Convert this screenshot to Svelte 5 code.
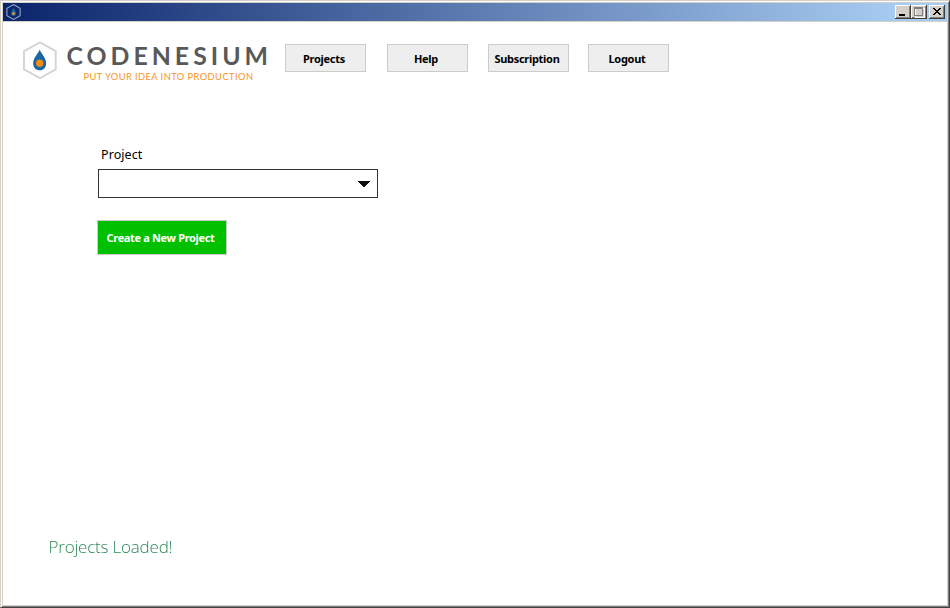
<script>
  const menu = [
    { id: 'projects', label: 'Projects' },
    { id: 'help', label: 'Help' },
    { id: 'subscription', label: 'Subscription' },
    { id: 'logout', label: 'Logout' }
  ];
</script>

<div class="window">
  <div class="titlebar">
    <svg class="app-icon" width="17" height="16" viewBox="-.5 0 17 16">
      <path d="M8 .6 14.600 4.300v7.400L8 15.400 1.400 11.700V4.300Z" fill="none" stroke="#98a6c4" stroke-width="1.1" />
      <path d="M8 3.500C7 6 5.500 7.500 5.500 9.300a2.500 2.600 0 0 0 5 0C10.500 7.500 9 6 8 3.500Z" fill="#1467a2" />
      <circle cx="8" cy="9.500" r="1.500" fill="#e0912b" />
    </svg>
    <div class="controls">
      <button class="ctl" aria-label="Minimize">
        <svg width="16" height="14" shape-rendering="crispEdges"><rect x="4" y="9" width="6" height="2" fill="#000" /></svg>
      </button>
      <button class="ctl" aria-label="Maximize">
        <svg width="16" height="14" shape-rendering="crispEdges">
          <path d="M4 3h9v9H4z" fill="none" stroke="#fff" transform="translate(.5 .5)" />
          <path d="M3 2h9v2H3zM3 3h1v8H3zM11 3h1v8h-1zM3 10h9v1H3z" fill="#808080" />
        </svg>
      </button>
      <button class="ctl close" aria-label="Close">
        <svg width="16" height="14" shape-rendering="crispEdges">
          <path d="M4 3h2v1h1v1h2V4h1V3h2v1h-1v1h-1v1H9v1h1v1h1v1h1v1h-2V9H9V8H7v1H6v1H4V9h1V8h1V7h1V6H6V5H5V4H4z" fill="#000" />
        </svg>
      </button>
    </div>
  </div>

  <div class="client">
    <header>
      <svg class="logo" width="250" height="46" viewBox="20 38 250 46">
        <path d="M40 42.300 55.700 51.200V69.300L40 78.200 24 69.300V51.200Z" fill="none" stroke="#d4d6d6" stroke-width="2" />
        <path d="M39.700 49.500C38.200 54 33.200 57.500 33.200 63.500c0 4 2.800 6.800 6.500 6.800s6.400-2.800 6.400-6.800C46.100 57.500 41.200 54 39.700 49.500Z" fill="#1767a4" />
        <circle cx="39.700" cy="63.300" r="3.700" fill="#f58a12" />
        <text class="brand" x="66.500" y="65" textLength="201.500">CODENESIUM</text>
        <text class="tagline" x="83.500" y="80" textLength="169.500">PUT YOUR IDEA INTO PRODUCTION</text>
      </svg>
      <nav>
        {#each menu as item}
          <button class="nav-btn {item.id}"><span>{item.label}</span></button>
        {/each}
      </nav>
    </header>

    <main>
      <label for="project">Project</label>
      <button id="project" class="combo" aria-label="Project">
        <svg width="12" height="6" shape-rendering="crispEdges"><path d="M0 0h12v1h-1v1h-1v1H9v1H8v1H7v1H5V5H4V4H3V3H2V2H1V1H0z" fill="#111" /></svg>
      </button>
      <button class="create"><span>Create a New Project</span></button>
    </main>

    <div class="status">Projects Loaded!</div>
  </div>
</div>

<style>
  :global(body) { margin: 0; overflow: hidden; }
  * { box-sizing: border-box; }
  button { margin: 0; padding: 0; font: inherit; border-radius: 0; }
  svg { display: block; }
  .window {
    width: 950px;
    height: 608px;
    display: flex;
    flex-direction: column;
    background: #d4d0c8;
    border: 1px solid;
    border-color: #d4d0c8 #404040 #404040 #d4d0c8;
    box-shadow: inset 1px 1px #fff, inset -1px -1px #808080;
    padding: 2px;
    font-family: "Noto Sans", "Open Sans", sans-serif;
  }
  .titlebar {
    height: 18px;
    flex: none;
    display: flex;
    justify-content: space-between;
    align-items: center;
    padding: 0 2px;
    background: linear-gradient(90deg, #0a246a, #a6caf0 890px);
  }
  .controls { display: flex; }
  .ctl {
    width: 16px;
    height: 14px;
    border: 0;
    background: #d4d0c8;
    box-shadow: inset -1px -1px #404040, inset 1px 1px #fff, inset -2px -2px #808080;
  }
  .close { margin-left: 2px; }
  .client {
    flex: 1;
    display: flex;
    flex-direction: column;
    background: #fff;
    border-top: 1px solid #d4d0c8;
  }
  header { display: flex; height: 108px; padding: 16px 0 0 17px; }
  .brand { font: 700 24.800px Lato, sans-serif; fill: #58595b; }
  .tagline { font: 400 9.300px Lato, sans-serif; fill: #f7941e; }
  nav { display: flex; gap: 20px; padding: 6px 0 0 15px; }
  .nav-btn {
    width: 81px;
    height: 28px;
    border: 1px solid #ccc;
    background: #eee;
    color: #000;
    font-weight: 700;
    font-size: 11px;
    letter-spacing: -.3px;
    line-height: 26px;
    white-space: nowrap;
  }
  .nav-btn span { display: block; padding-top: 1px; margin: 0 -2px 0 -5px; }
  .projects { margin-right: 1px; }
  .logout { margin-left: -1px; }
  main { display: flex; flex-direction: column; align-items: flex-start; padding: 14px 0 0 94px; flex: 1; }
  label { font-size: 12.500px; line-height: 22px; letter-spacing: .08px; padding-left: 4px; height: 25px; color: #000; }
  .combo {
    width: 280px;
    height: 29px;
    margin-left: 1px;
    display: flex;
    align-items: center;
    justify-content: flex-end;
    padding-right: 8px;
    border: 1px solid #333;
    background: #fff;
  }
  .combo svg { margin-right: -.5px; }
  .create {
    width: 130px;
    height: 35px;
    margin-top: 22px;
    border: 1px solid #ccc;
    background: #00c000;
    color: #fff;
    font-weight: 700;
    font-size: 11px;
    letter-spacing: -.35px;
    white-space: nowrap;
  }
  .create span { display: block; margin: 0 -5px 0 -8px; }
  .status {
    height: 70px;
    padding-left: 45.500px;
    color: #2e8b57;
    font: 300 17px/24px "Open Sans", "Noto Sans", sans-serif;
    letter-spacing: -.2px;
    will-change: transform;
  }
</style>
